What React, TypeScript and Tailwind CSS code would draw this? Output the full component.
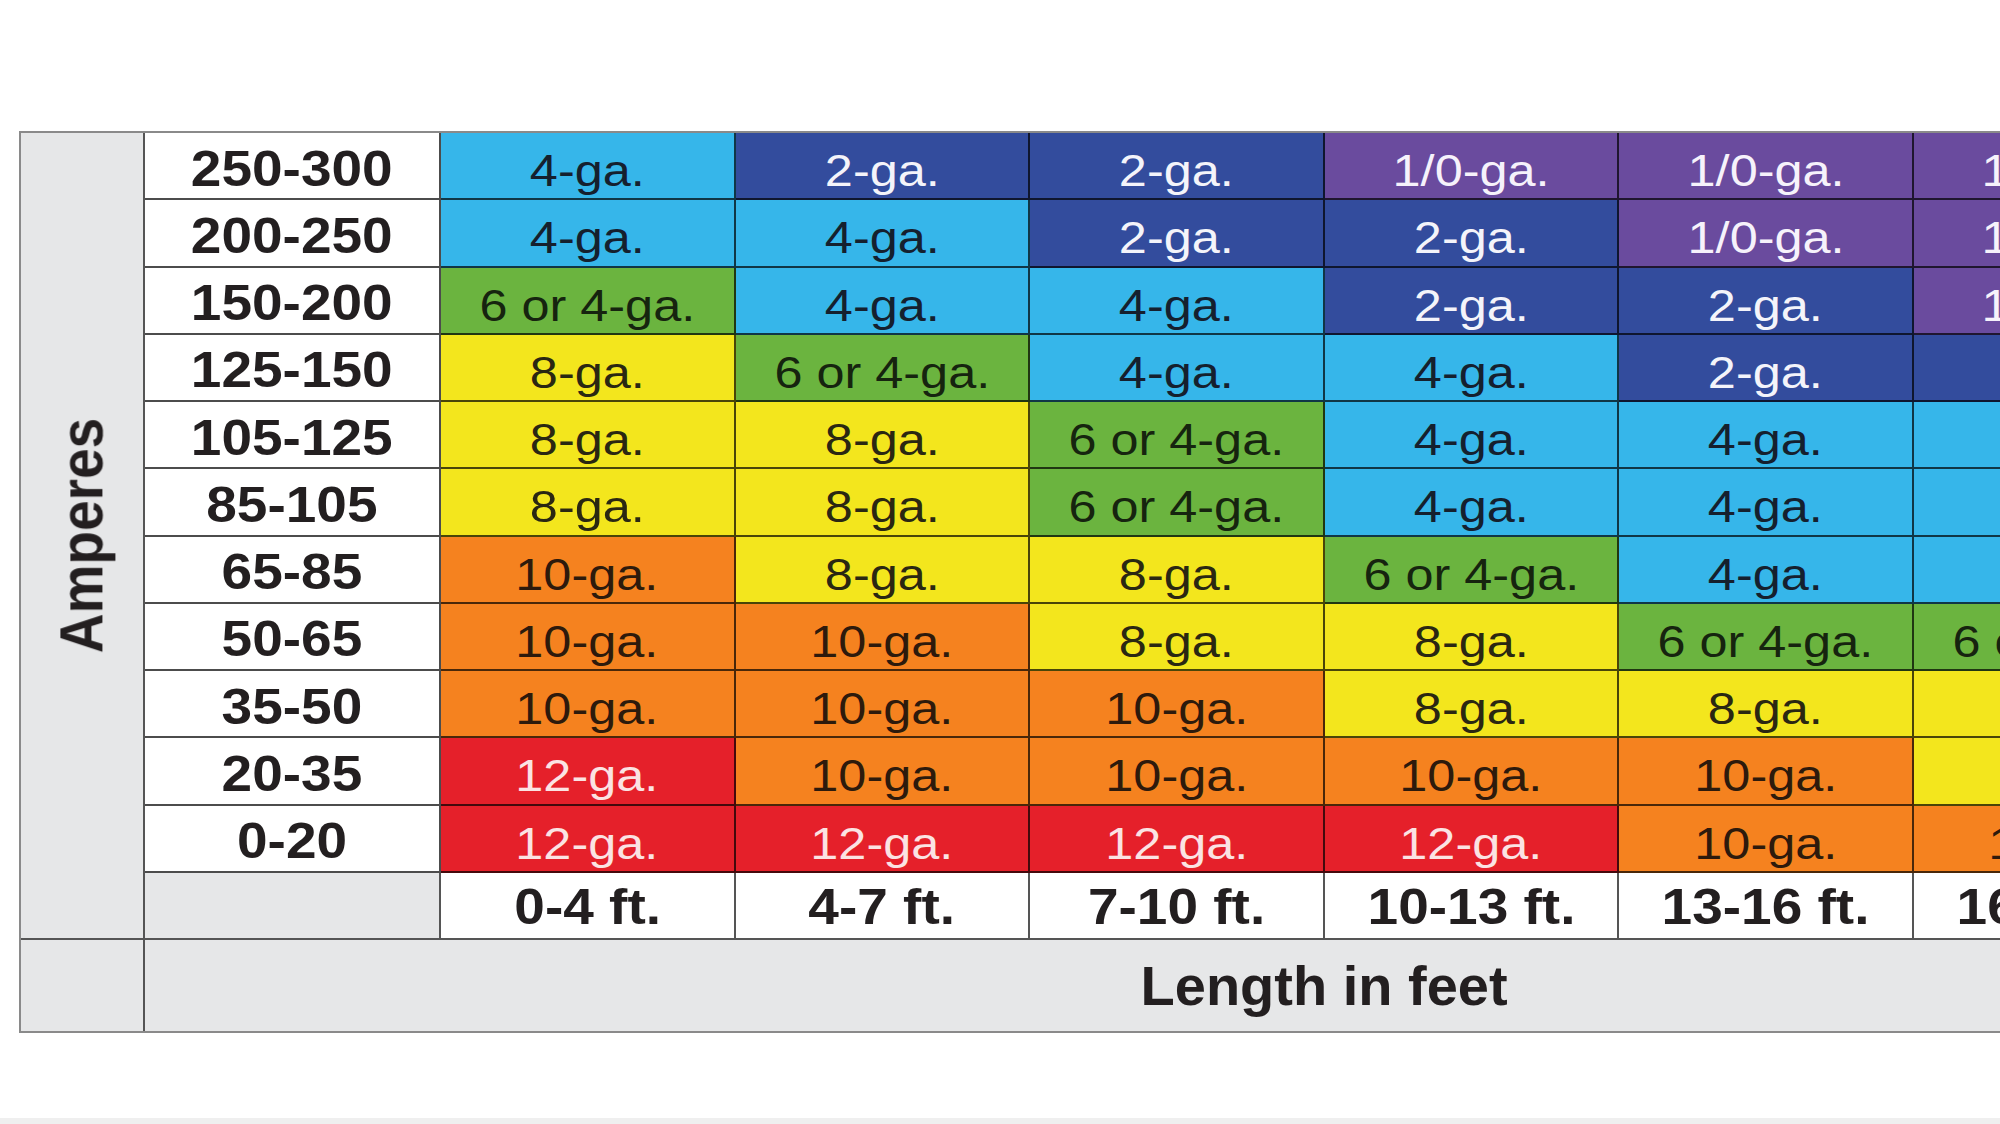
import React from 'react';

type K = 'LB' | 'DB' | 'P' | 'G' | 'Y' | 'O' | 'R';

const bg: Record<K, string> = {
  LB: 'bg-[#36b6ea] text-[#15202e]',
  DB: 'bg-[#334c9d] text-[#f4f4fa]',
  P: 'bg-[#6a4b9e] text-[#f6f2fb]',
  G: 'bg-[#6bb43f] text-[#16240f]',
  Y: 'bg-[#f3e61d] text-[#2a2712]',
  O: 'bg-[#f5821f] text-[#2d1a0c]',
  R: 'bg-[#e5202a] text-[#fbe3e3]',
};

const label: Record<K, string> = {
  LB: '4-ga.',
  DB: '2-ga.',
  P: '1/0-ga.',
  G: '6 or 4-ga.',
  Y: '8-ga.',
  O: '10-ga.',
  R: '12-ga.',
};

const rows: { amps: string; cells: K[] }[] = [
  { amps: '250-300', cells: ['LB', 'DB', 'DB', 'P', 'P', 'P', 'P'] },
  { amps: '200-250', cells: ['LB', 'LB', 'DB', 'DB', 'P', 'P', 'P'] },
  { amps: '150-200', cells: ['G', 'LB', 'LB', 'DB', 'DB', 'P', 'P'] },
  { amps: '125-150', cells: ['Y', 'G', 'LB', 'LB', 'DB', 'DB', 'P'] },
  { amps: '105-125', cells: ['Y', 'Y', 'G', 'LB', 'LB', 'LB', 'DB'] },
  { amps: '85-105', cells: ['Y', 'Y', 'G', 'LB', 'LB', 'LB', 'DB'] },
  { amps: '65-85', cells: ['O', 'Y', 'Y', 'G', 'LB', 'LB', 'LB'] },
  { amps: '50-65', cells: ['O', 'O', 'Y', 'Y', 'G', 'G', 'LB'] },
  { amps: '35-50', cells: ['O', 'O', 'O', 'Y', 'Y', 'Y', 'G'] },
  { amps: '20-35', cells: ['R', 'O', 'O', 'O', 'O', 'Y', 'Y'] },
  { amps: '0-20', cells: ['R', 'R', 'R', 'R', 'O', 'O', 'Y'] },
];

const lengths = ['0-4 ft.', '4-7 ft.', '7-10 ft.', '10-13 ft.', '13-16 ft.', '16-19 ft.', '19-22 ft.'];

export default function App() {
  return (
    <div className="w-[2000px] h-[1124px] overflow-hidden bg-white flex flex-col font-['Liberation_Sans',Arial,sans-serif] text-[#231f20]">
      <div className="mt-[131px] ml-[19px] w-max shrink-0 border-2 border-[#8a8a8a]">
        <div className="grid grid-cols-[124px_296px_repeat(7,294.6px)] grid-rows-[repeat(12,67.25px)_91px]">
          <div className="row-span-12 bg-[#e6e7e8] border-r-2 border-b-2 border-[#555] flex items-center justify-center">
            <div className="scale-x-[1.12]">
              <div className="-rotate-90 text-[55px] font-bold leading-none whitespace-nowrap">Amperes</div>
            </div>
          </div>
          {rows.map((r) => (
            <React.Fragment key={r.amps}>
              <div className="bg-white border-r-2 border-b-2 border-black/70 flex items-center justify-center pt-[6px]">
                <span className="inline-block scale-x-[1.1] text-[50px] font-bold leading-none whitespace-nowrap">{r.amps}</span>
              </div>
              {r.cells.map((k, i) => (
                <div
                  key={i}
                  className={`border-r-2 border-b-2 border-black/70 flex items-center justify-center pt-[10px] ${bg[k]}`}
                >
                  <span className="inline-block scale-x-[1.12] text-[45px] leading-none whitespace-nowrap">{label[k]}</span>
                </div>
              ))}
            </React.Fragment>
          ))}
          <div className="bg-[#e6e7e8] border-r-2 border-b-2 border-[#555]" />
          {lengths.map((l) => (
            <div key={l} className="bg-white border-r-2 border-b-2 border-[#555] flex items-center justify-center pt-[4px]">
              <span className="inline-block scale-x-[1.1] text-[50px] font-bold leading-none whitespace-nowrap">{l}</span>
            </div>
          ))}
          <div className="bg-[#e6e7e8] border-r-2 border-[#555]" />
          <div className="col-span-8 bg-[#e6e7e8] flex items-center justify-center">
            <span className="text-[56px] font-bold leading-none whitespace-nowrap">Length in feet</span>
          </div>
        </div>
      </div>
      <div className="flex-1" />
      <div className="h-[6px] shrink-0 bg-[#efefef]" />
    </div>
  );
}
